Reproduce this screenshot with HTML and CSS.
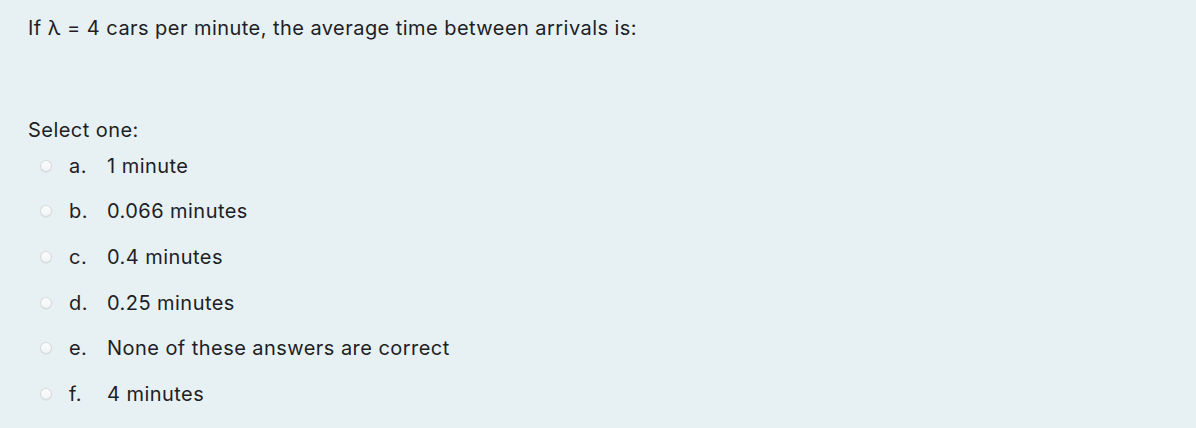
FILE: index.html
```html
<!DOCTYPE html>
<html>
<head>
<meta charset="utf-8">
<link rel="stylesheet" href="styles.css">
</head>
<body>
<div class="formulation">
  <div class="qtext">If λ = 4 cars per minute, the average time between arrivals is:</div>
  <div class="ablock">
    <div class="prompt">Select one:</div>
    <div class="answer">
      <div class="option"><span class="radio"></span><span class="num">a.</span><span class="txt">1 minute</span></div>
      <div class="option"><span class="radio"></span><span class="num">b.</span><span class="txt">0.066 minutes</span></div>
      <div class="option"><span class="radio"></span><span class="num">c.</span><span class="txt">0.4 minutes</span></div>
      <div class="option"><span class="radio"></span><span class="num">d.</span><span class="txt">0.25 minutes</span></div>
      <div class="option"><span class="radio"></span><span class="num">e.</span><span class="txt">None of these answers are correct</span></div>
      <div class="option"><span class="radio"></span><span class="num">f.</span><span class="txt">4 minutes</span></div>
    </div>
  </div>
</div>
</body>
</html>
```
FILE: styles.css
```css
html, body {
  margin: 0;
  padding: 0;
  background: #e7f1f4;
}
.formulation {
  width: 1196px;
  height: 428px;
  box-sizing: border-box;
  padding: 15px 28px 0 28px;
  font-family: Inter, "Noto Sans", sans-serif;
  font-size: 20px;
  letter-spacing: 0.45px;
  line-height: 26px;
  color: #1d2125;
  background: #e7f1f4;
}
.qtext {
  margin-bottom: 76px;
}
.prompt {
  margin-bottom: 10px;
}
.answer {
  display: flex;
  flex-direction: column;
}
.option {
  display: flex;
  align-items: center;
  height: 45.6px;
  padding-left: 12px;
}
.option:first-child { margin-top: -10px; }
.radio {
  width: 12px;
  height: 12px;
  border-radius: 50%;
  background: linear-gradient(#fdfdfd, #f1f3f4);
  box-shadow: inset 0 0 0 1px #d3d9dc, 0 0.5px 1px rgba(0,0,0,0.1);
  margin-right: 17px;
  flex: none;
}
.num {
  width: 38px;
  flex: none;
}
```
